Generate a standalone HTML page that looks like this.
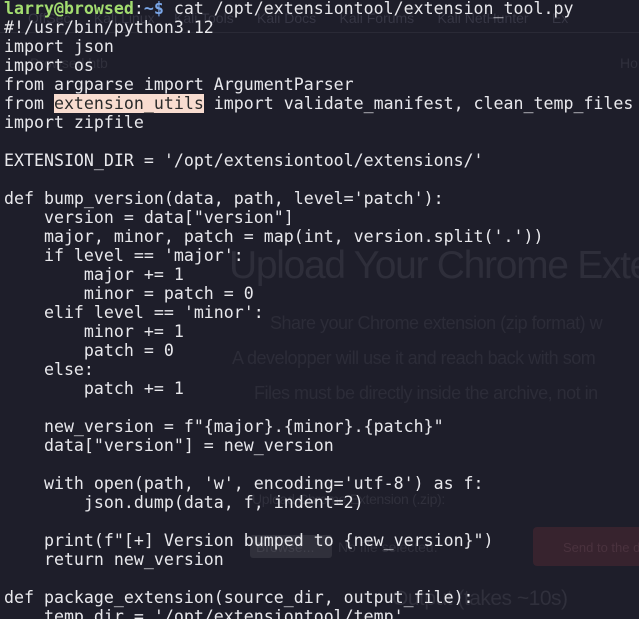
<!DOCTYPE html>
<html><head><style>
html,body{margin:0;padding:0;width:639px;height:619px;overflow:hidden;background:#1e1e2a;}
#wrap{position:absolute;left:0;top:0;width:639px;height:619px;overflow:hidden}
.bg{position:absolute;font-family:"Liberation Sans",sans-serif;color:#30303c;white-space:nowrap;}
pre{position:absolute;left:4px;top:-1px;margin:0;font-family:"DejaVu Sans Mono",monospace;font-size:16.6px;line-height:19px;color:#e8e8ec;}
.u{color:#a3dd70;font-weight:bold}.p{color:#7aa6e8;font-weight:bold}
.h{background:#f8dcd0;color:#2a2a2a}
</style></head><body><div id="wrap">
<div style="position:absolute;left:0;top:32px;width:639px;height:1px;background:#2a2a36"></div>
<div class="bg" style="left:28px;top:10px;font-size:14px;color:#363644">OffSec &nbsp;&nbsp;&nbsp;&nbsp; Kali Linux &nbsp;&nbsp;&nbsp; Kali Tools &nbsp;&nbsp;&nbsp;&nbsp; Kali Docs &nbsp;&nbsp;&nbsp;&nbsp; Kali Forums &nbsp;&nbsp;&nbsp;&nbsp; Kali NetHunter &nbsp;&nbsp;&nbsp;&nbsp; Ex</div>
<div class="bg" style="left:30px;top:55px;font-size:14px">Browsed.htb</div>
<div class="bg" style="left:620px;top:55px;font-size:14px">Ho</div>
<div class="bg" style="left:229px;top:244px;font-size:39px;letter-spacing:-1.3px;color:#2e2e3a">Upload Your Chrome Exte</div>
<div class="bg" style="left:270px;top:313px;font-size:18px;letter-spacing:-0.5px;color:#2c2c38">Share your Chrome extension (zip format) w</div>
<div class="bg" style="left:232px;top:348px;font-size:18px;letter-spacing:-0.5px;color:#2c2c38">A developper will use it and reach back with som</div>
<div class="bg" style="left:254px;top:383px;font-size:18px;letter-spacing:-0.5px;color:#2c2c38">Files must be directly inside the archive, not in</div>
<div class="bg" style="left:252px;top:491px;font-size:14px;letter-spacing:-0.3px">Upload Chrome Extension (.zip):</div>
<div style="position:absolute;left:250px;top:535px;width:82px;height:23px;background:#30303b;border-radius:3px"></div>
<div class="bg" style="left:256px;top:539px;font-size:14px;color:#40404b">Browse...</div>
<div class="bg" style="left:338px;top:539px;font-size:14px">No file selected.</div>
<div style="position:absolute;left:533px;top:527px;width:110px;height:39px;background:#37232e;border-radius:4px"></div>
<div class="bg" style="left:563px;top:540px;font-size:13px;color:#4a323e">Send to the d</div>
<div class="bg" style="left:392px;top:587px;font-size:21px;letter-spacing:-0.5px">Output (takes ~10s)</div>
<pre><span class="u">larry@browsed</span>:<span class="p">~$</span> cat /opt/extensiontool/extension_tool.py
#!/usr/bin/python3.12
import json
import os
from argparse import ArgumentParser
from <span class="h">extension_utils</span> import validate_manifest, clean_temp_files
import zipfile

EXTENSION_DIR = '/opt/extensiontool/extensions/'

def bump_version(data, path, level='patch'):
    version = data["version"]
    major, minor, patch = map(int, version.split('.'))
    if level == 'major':
        major += 1
        minor = patch = 0
    elif level == 'minor':
        minor += 1
        patch = 0
    else:
        patch += 1

    new_version = f"{major}.{minor}.{patch}"
    data["version"] = new_version

    with open(path, 'w', encoding='utf-8') as f:
        json.dump(data, f, indent=2)

    print(f"[+] Version bumped to {new_version}")
    return new_version

def package_extension(source_dir, output_file):
    temp_dir = '/opt/extensiontool/temp'
</pre>
</div></body></html>
